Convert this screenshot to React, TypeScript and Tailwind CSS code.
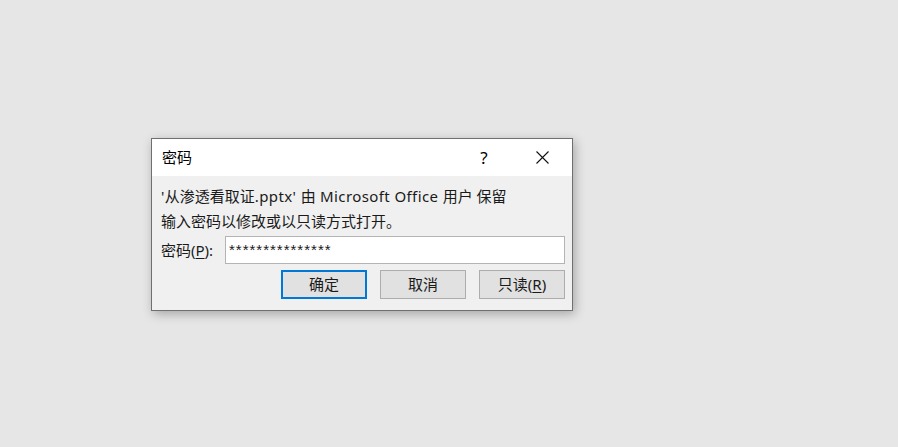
import { useState } from "react"

const font = {
  fontFamily: '"Noto Sans", "Noto Sans CJK SC", sans-serif',
}

function DialogButton({
  children,
  primary = false,
}: {
  children: React.ReactNode
  primary?: boolean
}) {
  return (
    <button
      className={`w-[86px] h-[29px] flex items-center justify-center bg-[#e1e1e1] text-[15px] text-[#1a1a1a] leading-none ${
        primary ? "border-2 border-[#0078d7]" : "border border-[#adadad]"
      }`}
    >
      {children}
    </button>
  )
}

export default function App() {
  const [password, setPassword] = useState("***************")

  return (
    <div
      className="min-h-screen w-full bg-[#e6e6e6] pl-[151px] pt-[138px]"
      style={font}
    >
      <div className="w-[422px] border border-[#6f6f6f] bg-[#f0f0f0] shadow-[2px_3px_10px_rgba(0,0,0,0.28)]">
        {/* title bar */}
        <div className="h-[37px] bg-white flex items-center pl-[10px] text-[15px] text-black">
          <span className="flex-1">密码</span>
          <span className="w-[14px] mr-[45px] text-center text-[17px] leading-none">?</span>
          <svg
            width="13"
            height="13"
            viewBox="0 0 13 13"
            className="mr-[23px]"
            fill="none"
            stroke="#111"
            strokeWidth="1.1"
          >
            <path d="M0.5 0.5 L12.5 12.5 M12.5 0.5 L0.5 12.5" />
          </svg>
        </div>

        {/* body */}
        <div className="pt-[8px] pb-[11px] pl-[9px] pr-[7px] text-[15px] text-[#1a1a1a]">
          <p className="leading-[25px]">
            <span className="tracking-[0.4px]">'</span>从渗透看取证
            <span className="tracking-[0.4px]">.pptx' </span>由
            <span className="tracking-[0.4px]"> Microsoft Office </span>用户 保留
          </p>
          <p className="leading-[25px]">输入密码以修改或以只读方式打开。</p>

          <div className="mt-[2px] flex items-center">
            <label className="w-[64px] leading-none">
              密码(<span className="underline underline-offset-2">P</span>):
            </label>
            <input
              type="text"
              value={password}
              onChange={(e) => setPassword(e.target.value)}
              className="flex-1 h-[28px] border border-[#b4b4b4] bg-white pl-[3px] text-[15px] tracking-[1px] leading-none outline-none pb-[2px] text-[#1a1a1a]"
              style={{ fontFamily: '"Liberation Sans", sans-serif' }}
            />
          </div>

          <div className="mt-[6px] flex justify-end gap-[13px]">
            <DialogButton primary>确定</DialogButton>
            <DialogButton>取消</DialogButton>
            <DialogButton>
              只读(<span className="underline underline-offset-2">R</span>)
            </DialogButton>
          </div>
        </div>
      </div>
    </div>
  )
}
